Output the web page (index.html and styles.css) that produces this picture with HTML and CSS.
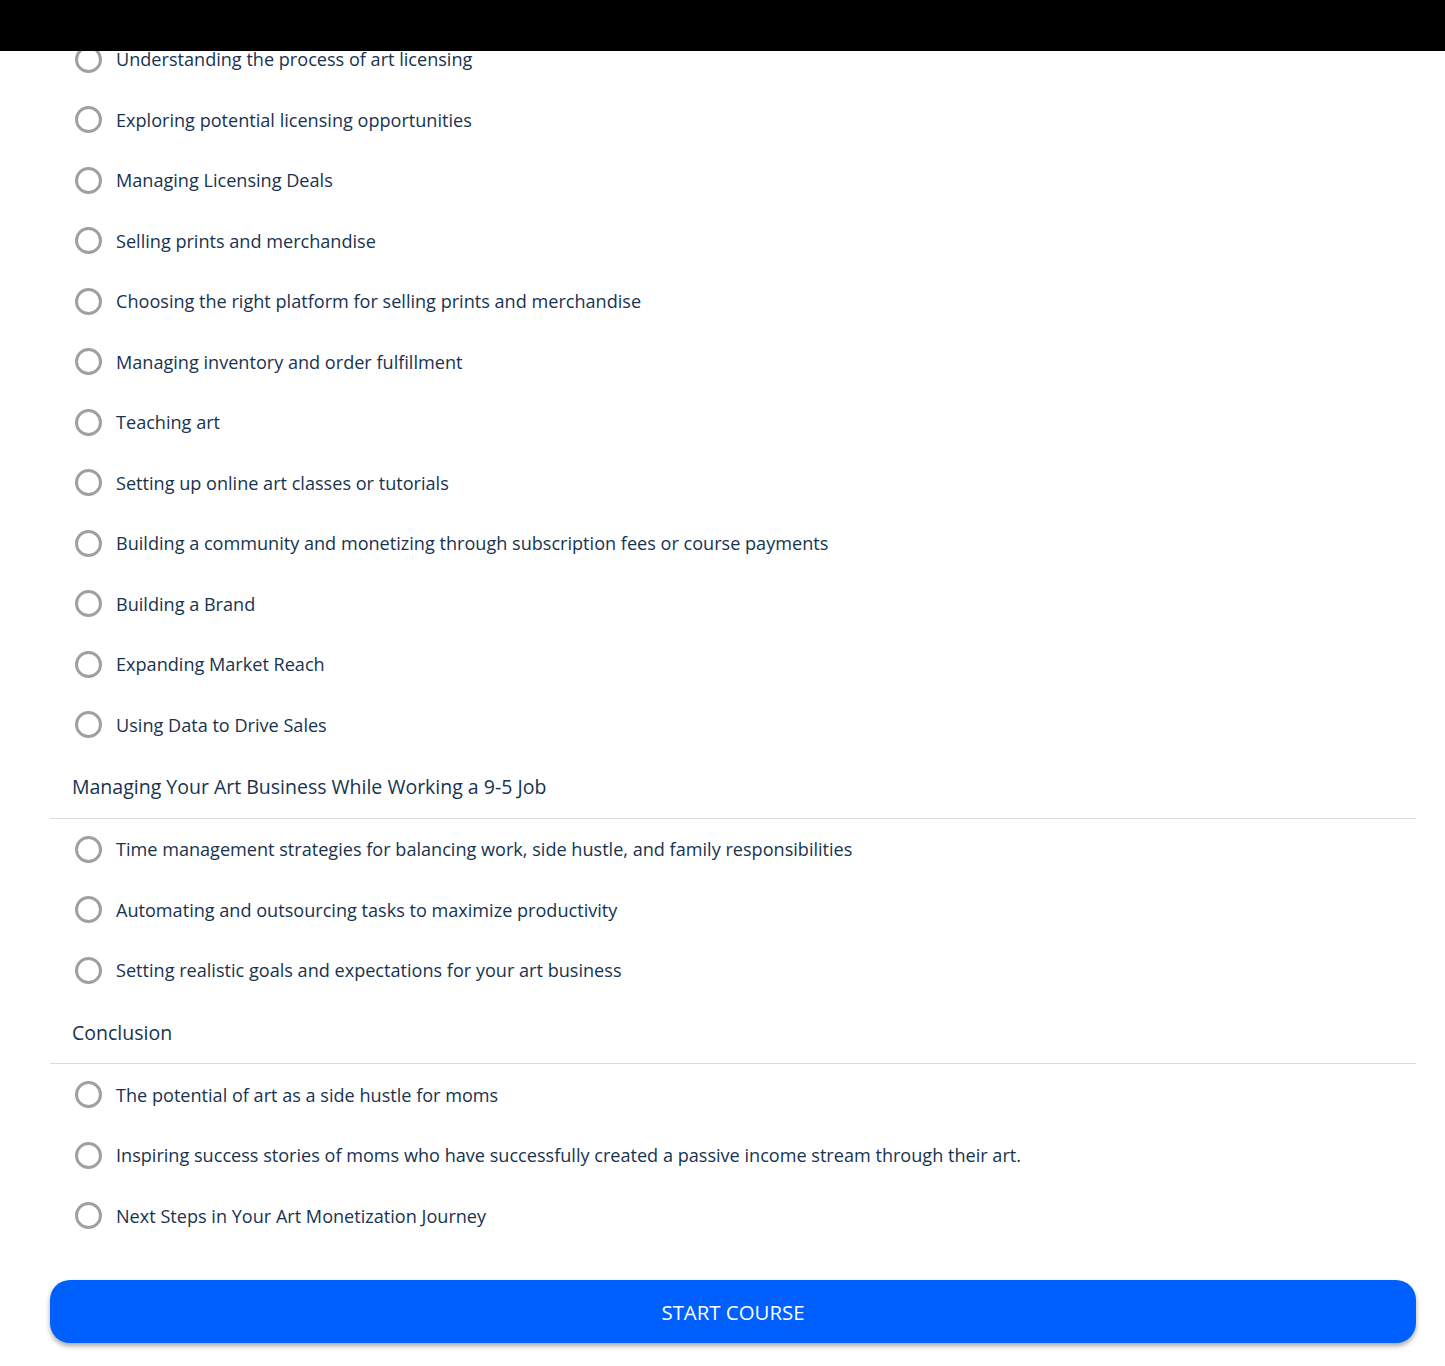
FILE: index.html
```html
<!DOCTYPE html>
<html>
<head>
<meta charset="utf-8">
<link rel="stylesheet" href="styles.css">
</head>
<body>

<div class="topBar"></div>

<div class="courseOutline">
  <ul class="lessonList">
    <li class="lesson"><span class="dot"></span>Understanding the process of art licensing</li>
    <li class="lesson"><span class="dot"></span>Exploring potential licensing opportunities</li>
    <li class="lesson"><span class="dot"></span>Managing Licensing Deals</li>
    <li class="lesson"><span class="dot"></span>Selling prints and merchandise</li>
    <li class="lesson"><span class="dot"></span>Choosing the right platform for selling prints and merchandise</li>
    <li class="lesson"><span class="dot"></span>Managing inventory and order fulfillment</li>
    <li class="lesson"><span class="dot"></span>Teaching art</li>
    <li class="lesson"><span class="dot"></span>Setting up online art classes or tutorials</li>
    <li class="lesson"><span class="dot"></span>Building a community and monetizing through subscription fees or course payments</li>
    <li class="lesson"><span class="dot"></span>Building a Brand</li>
    <li class="lesson"><span class="dot"></span>Expanding Market Reach</li>
    <li class="lesson"><span class="dot"></span>Using Data to Drive Sales</li>
  </ul>

  <h3 class="sectionTitle">Managing Your Art Business While Working a 9-5 Job</h3>
  <ul class="lessonList">
    <li class="lesson"><span class="dot"></span>Time management strategies for balancing work, side hustle, and family responsibilities</li>
    <li class="lesson"><span class="dot"></span>Automating and outsourcing tasks to maximize productivity</li>
    <li class="lesson"><span class="dot"></span>Setting realistic goals and expectations for your art business</li>
  </ul>

  <h3 class="sectionTitle">Conclusion</h3>
  <ul class="lessonList">
    <li class="lesson"><span class="dot"></span>The potential of art as a side hustle for moms</li>
    <li class="lesson"><span class="dot"></span>Inspiring success stories of moms who have successfully created a passive income stream through their art.</li>
    <li class="lesson"><span class="dot"></span>Next Steps in Your Art Monetization Journey</li>
  </ul>

  <button class="startBtn">START COURSE</button>
</div>

</body>
</html>
```

FILE: styles.css
```css
/* course outline page */

body {
  margin: 0;
  background: #fff;
  font-family: "Open Sans", "Noto Sans", sans-serif;
  color: #173350;
}

/* black bar stuck over the top of the page */
.topBar {
  position: fixed;
  top: 0;
  left: 0;
  right: 0;
  height: 51px;
  background: #000;
  z-index: 10;
}

.courseOutline {
  margin: 0 29px 0 50px;
  padding-top: 28.75px;
  padding-bottom: 23px;
}

.lessonList {
  list-style: none;
  margin: 0;
  padding: 0;
}

.lesson {
  display: flex;
  align-items: center;
  height: 60.5px;
  padding-left: 25px;
  font-size: 18.1px;
  gap: 14px;
}

.dot {
  box-sizing: border-box;
  width: 27px;
  height: 27px;
  border: 3px solid #a0a0a0;
  border-radius: 50%;
  flex: none;
}

.sectionTitle {
  margin: 0;
  padding: 18.5px 0 16.5px 22px;
  line-height: 28px;
  font-size: 19.5px;
  font-weight: 400;
  border-bottom: 1px solid #dcdcdc;
}

.startBtn {
  display: block;
  width: 100%;
  height: 63px;
  margin-top: 34.5px;
  border: none;
  border-radius: 20px;
  background: #0060ff;
  color: #fff;
  font-family: "Open Sans", "Noto Sans", sans-serif;
  font-size: 20.4px;
  box-shadow: 0 3px 5px rgba(0, 0, 0, 0.35);
}
```
